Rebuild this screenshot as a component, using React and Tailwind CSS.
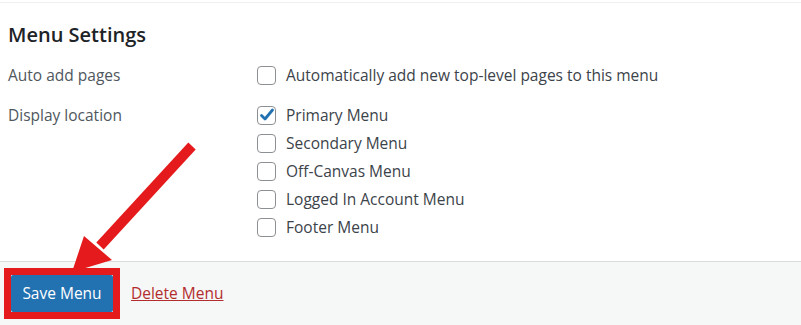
const locations = [
  { name: "Primary Menu", checked: true },
  { name: "Secondary Menu", checked: false },
  { name: "Off-Canvas Menu", checked: false },
  { name: "Logged In Account Menu", checked: false },
  { name: "Footer Menu", checked: false },
];

const Checkbox = ({ checked }) => (
  <span className="w-[19px] h-[19px] shrink-0 rounded-[4px] border border-[#8c8f94] bg-white flex items-center justify-center">
    {checked && (
      <svg width="16" height="16" viewBox="0 0 16 16">
        <path d="M2.5 8.5 L6 12 L13.5 3" fill="none" stroke="#2271b1" strokeWidth="2.8" strokeLinecap="round" strokeLinejoin="round" />
      </svg>
    )}
  </span>
);

export default function App() {
  return (
    <div
      className="relative w-[801px] h-[325px] bg-white overflow-hidden flex flex-col"
      style={{ fontFamily: '"Open Sans", "Noto Sans", sans-serif' }}
    >
      <div className="mt-[2px] border-t border-[#f0f0f1]" />
      <section className="flex-1 px-2">
        <h3 className="mt-[18px] text-[20px] font-semibold text-[#1d2327] leading-[28px]">
          Menu Settings
        </h3>
        <div className="flex mt-[15px] text-[15.5px] leading-[22px]">
          <div className="w-[249px] text-[#50575e]">Auto add pages</div>
          <label className="flex items-center gap-[10px] text-[#3c434a]">
            <Checkbox />
            <span>Automatically add new top-level pages to this menu</span>
          </label>
        </div>
        <div className="flex mt-[18px] text-[15.5px] leading-[22px]">
          <div className="w-[249px] text-[#50575e]">Display location</div>
          <ul className="flex flex-col gap-[6px]">
            {locations.map((item) => (
              <li key={item.name} className="flex items-center gap-[10px] text-[#3c434a]">
                <Checkbox checked={item.checked} />
                <span>{item.name}</span>
              </li>
            ))}
          </ul>
        </div>
      </section>
      <footer className="h-[64px] bg-[#f6f7f7] border-t border-[#dcdcde] flex items-center pl-[4px]">
        <div className="border-[7px] border-[#e41a1c]">
          <button className="w-[102px] h-[37px] bg-[#2271b1] text-white text-[15.5px] rounded-[2px]">
            Save Menu
          </button>
        </div>
        <a className="ml-[11px] text-[15.5px] text-[#b32d2e] underline">Delete Menu</a>
      </footer>
      <svg className="absolute left-0 top-0 pointer-events-none" width="801" height="325">
        <line x1="192" y1="146" x2="100" y2="246" stroke="#e41a1c" strokeWidth="10" strokeLinecap="butt" />
        <polygon points="84,236 112,260 72,272" fill="#e41a1c" />
      </svg>
    </div>
  );
}
